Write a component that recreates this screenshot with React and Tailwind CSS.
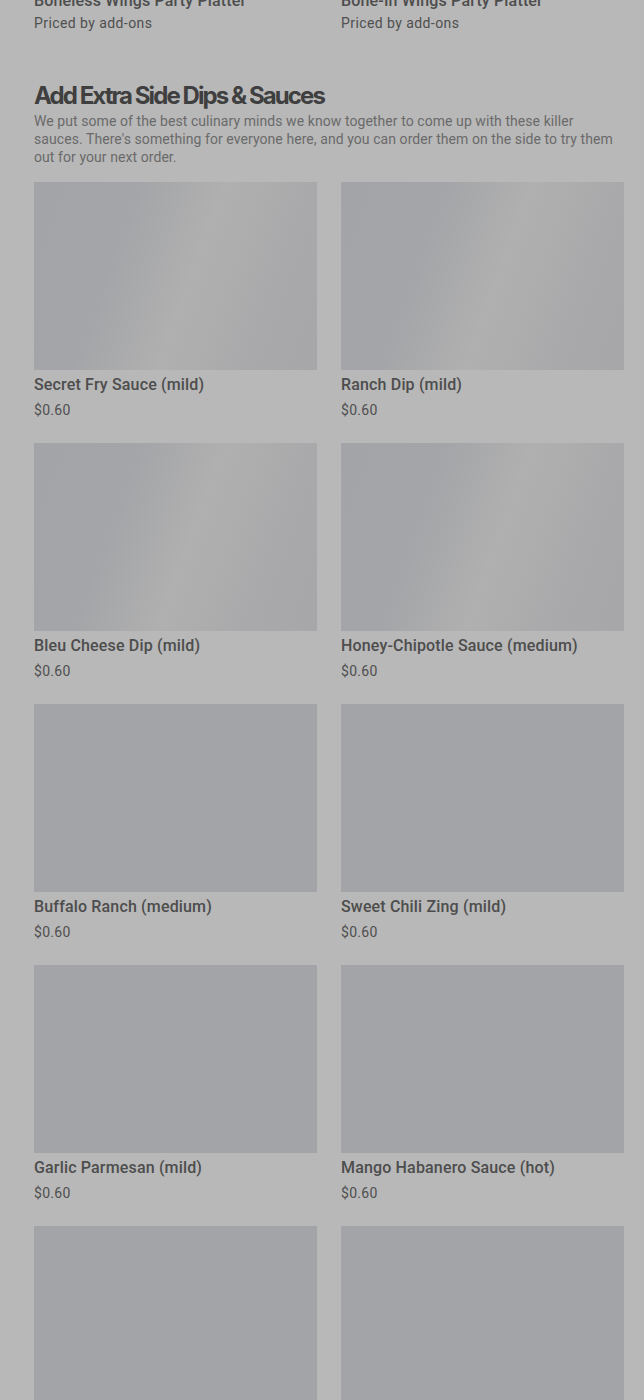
import React from "react";

const items = [
  ["Secret Fry Sauce (mild)", true],
  ["Ranch Dip (mild)", true],
  ["Bleu Cheese Dip (mild)", true],
  ["Honey-Chipotle Sauce (medium)", true],
  ["Buffalo Ranch (medium)", false],
  ["Sweet Chili Zing (mild)", false],
  ["Garlic Parmesan (mild)", false],
  ["Mango Habanero Sauce (hot)", false],
  ["Extra Sauce", false],
  ["Extra Dip", false],
];

function Card({ name, shimmer }) {
  return (
    <div className="flex flex-col">
      <div
        className={
          "h-[188px] w-full " +
          (shimmer
            ? "bg-[linear-gradient(110deg,#a3a4a8_0%,#a4a5a8_30%,#b0b0b0_55%,#a9a9ab_80%,#a7a7a9_100%)]"
            : "bg-[#a3a4a8]")
        }
      />
      <div className="mt-[3px] text-[16px] leading-[24px] font-medium tracking-[0.01em] text-[#4d4d4d]">{name}</div>
      <div className="mt-[3px] text-[14px] leading-[20px] text-[#4f4f4f] tracking-[0.02em]">$0.60</div>
    </div>
  );
}

export default function App() {
  return (
    <div
      className="min-h-[1400px] bg-[#b8b8b8]"
      style={{ fontFamily: "Roboto, 'Liberation Sans', sans-serif" }}
    >
      <div className="pl-[34px] pr-[20px] -mt-[11px]">
        <div className="grid grid-cols-2 gap-x-[24px]">
          <div>
            <div className="text-[16px] leading-[24px] font-medium tracking-[0.01em] text-[#4d4d4d]">Boneless Wings Party Platter</div>
            <div className="text-[14px] leading-[20px] text-[#4f4f4f] tracking-[0.03em]">Priced by add-ons</div>
          </div>
          <div>
            <div className="text-[16px] leading-[24px] font-medium tracking-[0.01em] text-[#4d4d4d]">Bone-In Wings Party Platter</div>
            <div className="text-[14px] leading-[20px] text-[#4f4f4f] tracking-[0.03em]">Priced by add-ons</div>
          </div>
        </div>
        <h2
          className="mt-[49px] text-[24px] leading-[28px] font-bold tracking-[-0.08em] text-[#3f3f3f]"
          style={{ fontFamily: "Inter, 'Liberation Sans', sans-serif" }}
        >
          Add Extra Side Dips &amp; Sauces
        </h2>
        <p className="mt-[2px] text-[14px] leading-[18px] text-[#6a6a6a] tracking-[0.005em]">
          We put some of the best culinary minds we know together to come up with these killer
          <br />
          sauces. There's something for everyone here, and you can order them on the side to try them out for your next order.
        </p>
        <div className="mt-[16px] grid grid-cols-2 gap-x-[24px] gap-y-[23px]">
          {items.map(([n, s]) => (
            <Card key={n} name={n} shimmer={s} />
          ))}
        </div>
      </div>
    </div>
  );
}
